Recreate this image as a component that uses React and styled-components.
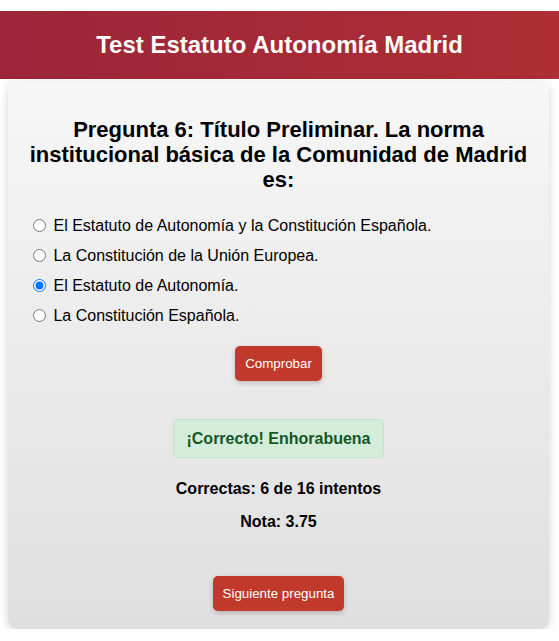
import React, { useState } from "react";
import styled, { createGlobalStyle } from "styled-components";

const GlobalStyle = createGlobalStyle`
  html, body {
    margin: 0;
    padding: 0;
    background: #fff;
    font-family: "Liberation Sans", Arial, sans-serif;
    color: #000;
  }
`;

const Page = styled.div`
  padding-top: 11px;
`;

const Header = styled.header`
  height: 68px;
  display: flex;
  align-items: center;
  justify-content: center;
  background: linear-gradient(90deg, #9c2539, #ad2f35);
  color: #fff;

  h1 {
    margin: 0;
    font-size: 24px;
    font-weight: bold;
  }
`;

const Card = styled.main`
  margin: 2px 10px 0 8px;
  padding: 20px 20px 18px;
  border-radius: 10px;
  background: linear-gradient(180deg, #f7f7f7, #dfdfdf);
  box-shadow: 0 2px 8px rgba(0, 0, 0, 0.18);
  display: flex;
  flex-direction: column;
`;

const Question = styled.h2`
  margin: 16px 0 19px;
  font-size: 22px;
  line-height: 25px;
  font-weight: bold;
  text-align: center;
`;

const Options = styled.div`
  display: flex;
  flex-direction: column;
`;

const Option = styled.label`
  display: block;
  padding: 6px 0;
  font-size: 16px;
  line-height: 18px;
  cursor: pointer;

  input {
    margin: 0 3px 0 5px;
    width: 13px;
    height: 13px;
    vertical-align: -1px;
  }
`;

const Button = styled.button`
  align-self: center;
  margin-top: ${(p) => p.$top}px;
  padding: 10px;
  border: none;
  border-radius: 5px;
  background: #c0392b;
  color: #fff;
  font-family: "Liberation Sans", Arial, sans-serif;
  font-size: 13.33px;
  line-height: 15px;
  box-shadow: 0 2px 5px rgba(0, 0, 0, 0.2);
  cursor: pointer;
`;

const Feedback = styled.div`
  align-self: center;
  margin-top: 38px;
  padding: 10px 12px;
  border: 1px solid #c3e6cb;
  border-radius: 4px;
  background: #d4edda;
  color: #155724;
  font-size: 16px;
  line-height: 17px;
  font-weight: bold;
`;

const Stat = styled.p`
  margin: ${(p) => p.$top}px 0 0;
  text-align: center;
  font-size: 16px;
  line-height: 18px;
  font-weight: bold;
`;

const answers = [
  "El Estatuto de Autonomía y la Constitución Española.",
  "La Constitución de la Unión Europea.",
  "El Estatuto de Autonomía.",
  "La Constitución Española.",
];

export default function App() {
  const [selected, setSelected] = useState(2);

  return (
    <Page>
      <GlobalStyle />
      <Header>
        <h1>Test Estatuto Autonomía Madrid</h1>
      </Header>
      <Card>
        <Question>
          Pregunta 6: Título Preliminar. La norma institucional básica de la
          Comunidad de Madrid es:
        </Question>
        <Options>
          {answers.map((a, i) => (
            <Option key={i}>
              <input
                type="radio"
                name="respuesta"
                checked={selected === i}
                onChange={() => setSelected(i)}
              />{" "}
              {a}
            </Option>
          ))}
        </Options>
        <Button $top={15}>Comprobar</Button>
        <Feedback>¡Correcto! Enhorabuena</Feedback>
        <Stat $top={22}>Correctas: 6 de 16 intentos</Stat>
        <Stat $top={15}>Nota: 3.75</Stat>
        <Button $top={45}>Siguiente pregunta</Button>
      </Card>
    </Page>
  );
}
